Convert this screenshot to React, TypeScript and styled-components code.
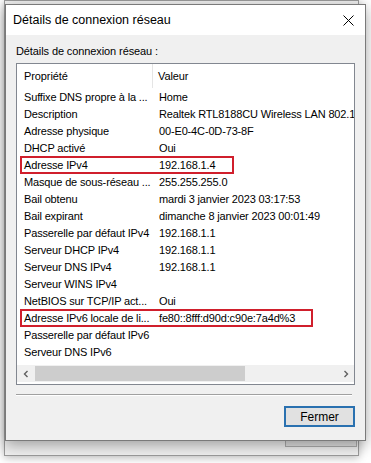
import React from 'react'
import styled, { createGlobalStyle } from 'styled-components'

const Global = createGlobalStyle`
  html, body { margin: 0; padding: 0; background: #ffffff; }
  body { font-family: "Liberation Sans", Arial, sans-serif; color: #000; }
`

const Desktop = styled.div`
  position: relative;
  width: 371px;
  height: 463px;
  overflow: hidden;
  background: #ffffff;
`

const BackWindow = styled.div`
  position: absolute;
  left: 4px;
  top: 0;
  width: 355px;
  height: 456px;
  box-sizing: border-box;
  border: 1px solid #9a9a9a;
  background: #f0f0f0;
  box-shadow: 0 2px 8px rgba(0, 0, 0, 0.25);
  display: flex;
  flex-direction: column;
  justify-content: flex-end;
  align-items: flex-end;
  padding: 0 1px 8px 0;
`

const BackButton = styled.div`
  width: 72px;
  height: 21px;
  box-sizing: border-box;
  border: 1px solid #adadad;
  background: #e1e1e1;
  font-size: 12px;
  color: #000;
  display: flex;
  align-items: center;
  justify-content: center;
`

const Dialog = styled.div`
  position: absolute;
  left: 5px;
  top: 4px;
  width: 361px;
  height: 437px;
  box-sizing: border-box;
  border: 1px solid #7a7a7a;
  background: #f0f0f0;
  box-shadow: 0 4px 14px rgba(0, 0, 0, 0.35);
  display: flex;
  flex-direction: column;
`

const TitleBar = styled.div`
  height: 30px;
  background: #ffffff;
  display: flex;
  align-items: center;
  justify-content: space-between;
  padding: 0 11px 0 7px;
  font-size: 12.5px;
`

const Body = styled.div`
  flex: 1;
  display: flex;
  flex-direction: column;
  padding: 10px 10px 0 10px;
`

const Caption = styled.div`
  font-size: 11px;
  height: 18px;
  line-height: 13px;
  letter-spacing: -0.1px;
`

const ListView = styled.div`
  width: 339px;
  height: 322px;
  box-sizing: border-box;
  border: 1px solid #828790;
  background: #ffffff;
  display: flex;
  flex-direction: column;
  overflow: hidden;
`

const Header = styled.div`
  height: 24px;
  display: flex;
  font-size: 11px;
  letter-spacing: -0.1px;
`

const HeaderCell = styled.div<{ $w?: number }>`
  width: ${p => (p.$w ? `${p.$w}px` : 'auto')};
  flex: ${p => (p.$w ? 'none' : '1')};
  box-sizing: border-box;
  padding-left: ${p => (p.$w ? 7 : 5)}px;
  display: flex;
  align-items: center;
  border-right: ${p => (p.$w ? '1px solid #e5e5e5' : 'none')};
`

const Rows = styled.div`
  flex: 1;
  display: flex;
  flex-direction: column;
`

const Row = styled.div`
  position: relative;
  height: 17px;
  display: flex;
  align-items: center;
  font-size: 11px;
  letter-spacing: -0.15px;
  white-space: nowrap;
`

const Cell = styled.div<{ $w?: number }>`
  width: ${p => (p.$w ? `${p.$w}px` : 'auto')};
  flex: none;
  box-sizing: border-box;
  padding-left: ${p => (p.$w ? 7 : 6)}px;
`

const Mark = styled.div<{ $w: number }>`
  position: absolute;
  left: 3px;
  top: 0;
  width: ${p => p.$w}px;
  height: 18px;
  box-sizing: border-box;
  border: 2px solid #d01f2c;
  pointer-events: none;
`

const HScroll = styled.div`
  height: 17px;
  margin-bottom: 2px;
  background: #f0f0f0;
  display: flex;
  align-items: center;
`

const ScrollArrow = styled.div`
  width: 17px;
  height: 17px;
  display: flex;
  align-items: center;
  justify-content: center;
`

const Track = styled.div`
  flex: 1;
  height: 17px;
  display: flex;
  align-items: center;
`

const Thumb = styled.div`
  width: 210px;
  height: 15px;
  margin-left: 1px;
  background: #cdcdcd;
`

const Separator = styled.div`
  margin-top: 9px;
  width: 336px;
  height: 1px;
  background: #a0a0a0;
  border-bottom: 1px solid #ffffff;
`

const Footer = styled.div`
  display: flex;
  justify-content: flex-end;
  padding-top: 10px;
  width: 339px;
`

const Button = styled.div`
  width: 71px;
  height: 21px;
  box-sizing: border-box;
  border: 2px solid #2a71b0;
  background: #e1e1e1;
  font-size: 12px;
  display: flex;
  align-items: center;
  justify-content: center;
`

const rows: { name: string; value: string; mark?: number }[] = [
  { name: 'Suffixe DNS propre à la ...', value: 'Home' },
  { name: 'Description', value: 'Realtek RTL8188CU Wireless LAN 802.1' },
  { name: 'Adresse physique', value: '00-E0-4C-0D-73-8F' },
  { name: 'DHCP activé', value: 'Oui' },
  { name: 'Adresse IPv4', value: '192.168.1.4', mark: 214 },
  { name: 'Masque de sous-réseau ...', value: '255.255.255.0' },
  { name: 'Bail obtenu', value: 'mardi 3 janvier 2023 03:17:53' },
  { name: 'Bail expirant', value: 'dimanche 8 janvier 2023 00:01:49' },
  { name: 'Passerelle par défaut IPv4', value: '192.168.1.1' },
  { name: 'Serveur DHCP IPv4', value: '192.168.1.1' },
  { name: 'Serveur DNS IPv4', value: '192.168.1.1' },
  { name: 'Serveur WINS IPv4', value: '' },
  { name: 'NetBIOS sur TCP/IP act...', value: 'Oui' },
  { name: 'Adresse IPv6 locale de li...', value: 'fe80::8fff:d90d:c90e:7a4d%3', mark: 293 },
  { name: 'Passerelle par défaut IPv6', value: '' },
  { name: 'Serveur DNS IPv6', value: '' },
]

const Close = () => (
  <svg width="11" height="11" viewBox="0 0 11 11">
    <path d="M0.5 0.5 L10.5 10.5 M10.5 0.5 L0.5 10.5" stroke="#000" strokeWidth="1" fill="none" />
  </svg>
)

const Chevron = ({ right }: { right?: boolean }) => (
  <svg width="6" height="8" viewBox="0 0 6 8">
    <path d={right ? 'M1.5 1 L4.5 4 L1.5 7' : 'M4.5 1 L1.5 4 L4.5 7'} stroke="#606060" strokeWidth="1.4" fill="none" />
  </svg>
)

export default function App() {
  return (
    <Desktop>
      <Global />
      <BackWindow>
        <BackButton>Fermer</BackButton>
      </BackWindow>
      <Dialog>
        <TitleBar>
          <span>Détails de connexion réseau</span>
          <Close />
        </TitleBar>
        <Body>
          <Caption>Détails de connexion réseau :</Caption>
          <ListView>
            <Header>
              <HeaderCell $w={136}>Propriété</HeaderCell>
              <HeaderCell>Valeur</HeaderCell>
            </Header>
            <Rows>
              {rows.map(r => (
                <Row key={r.name}>
                  {r.mark && <Mark $w={r.mark} />}
                  <Cell $w={136}>{r.name}</Cell>
                  <Cell>{r.value}</Cell>
                </Row>
              ))}
            </Rows>
            <HScroll>
              <ScrollArrow><Chevron /></ScrollArrow>
              <Track><Thumb /></Track>
              <ScrollArrow><Chevron right /></ScrollArrow>
            </HScroll>
          </ListView>
          <Separator />
          <Footer>
            <Button>Fermer</Button>
          </Footer>
        </Body>
      </Dialog>
    </Desktop>
  )
}
